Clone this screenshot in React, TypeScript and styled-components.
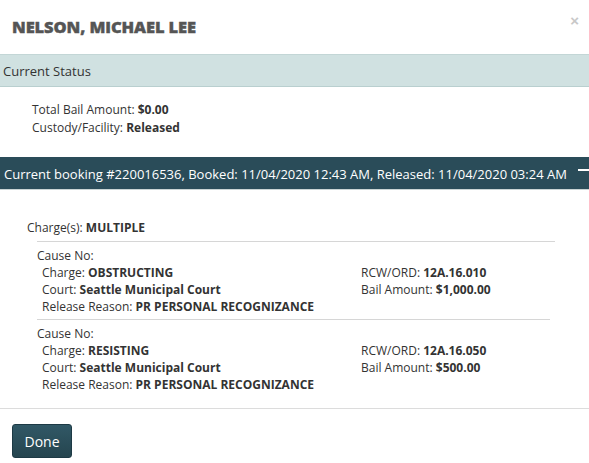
import React from "react";
import styled, { createGlobalStyle } from "styled-components";

const Global = createGlobalStyle`
  html, body { margin: 0; padding: 0; background: #fff; }
  body { font-family: "Open Sans", "Liberation Sans", Arial, sans-serif; color: #333; }
`;

const Modal = styled.div`
  width: 589px;
  height: 463px;
  background: #fff;
  display: flex;
  flex-direction: column;
  overflow: hidden;
  & > * { flex-shrink: 0; }
`;

const Header = styled.div`
  display: flex;
  align-items: center;
  justify-content: space-between;
  height: 54px;
  padding: 0 10px 0 12px;
  box-sizing: border-box;
`;

const Title = styled.h1`
  margin: 0;
  font-size: 16.5px;
  line-height: 24px;
  font-weight: 800;
  color: #555;
  letter-spacing: -0.1px;
  -webkit-text-stroke: 0.4px #555;
`;

const Close = styled.span`
  align-self: flex-start;
  margin-top: 12px;
  font-size: 15px;
  line-height: 18px;
  font-weight: 700;
  color: #c8c8c8;
  font-family: "Liberation Sans", Arial, sans-serif;
`;

const SectionBar = styled.div<{ $dark?: boolean }>`
  display: flex;
  align-items: center;
  justify-content: space-between;
  height: 33px;
  box-sizing: border-box;
  padding: 0 0 0 ${(p) => (p.$dark ? 4 : 3)}px;
  font-size: 13px;
  white-space: nowrap;
  background: ${(p) => (p.$dark ? "#2a4c59" : "#d0e1e1")};
  color: ${(p) => (p.$dark ? "#fff" : "#333")};
  border-top: 1px solid ${(p) => (p.$dark ? "#2a4c59" : "#c3d6d6")};
  border-bottom: 1px solid ${(p) => (p.$dark ? "#c9d4d4" : "#b9cfcf")};
`;

const Minus = styled.span`
  width: 11px;
  height: 2px;
  background: #fff;
  align-self: flex-start;
  margin-top: 11px;
`;

const StatusBody = styled.div`
  padding: 14px 0 20px 32px;
  font-size: 12px;
  line-height: 18px;
`;

const Line = styled.div`
  white-space: nowrap;
`;

const B = styled.b`
  font-weight: 700;
`;

const BookingBody = styled.div`
  padding: 29px 0 11px 27px;
  font-size: 12px;
  line-height: 17px;
`;

const ChargeList = styled.div`
  margin-left: 10px;
  margin-top: 5px;
`;

const Separator = styled.div<{ $width: number }>`
  width: ${(p) => p.$width}px;
  height: 1px;
  background: #d6d6d6;
`;

const Cause = styled.div`
  padding: 5px 0 4px;
`;

const CauseGrid = styled.div`
  display: grid;
  grid-template-columns: 319px auto;
  padding-left: 5px;
`;

const Footer = styled.div`
  border-top: 1px solid #dcdcdc;
  padding: 15px 12px;
`;

const DoneButton = styled.button`
  width: 60px;
  height: 34px;
  border: 1px solid #1d3a45;
  border-radius: 3px;
  background: linear-gradient(#315866, #25454f);
  color: #fff;
  font-family: "Open Sans", "Liberation Sans", Arial, sans-serif;
  font-size: 14px;
  padding: 0;
  cursor: pointer;
`;

type Charge = {
  charge: string;
  rcw: string;
  court: string;
  bail: string;
  reason: string;
};

const charges: Charge[] = [
  {
    charge: "OBSTRUCTING",
    rcw: "12A.16.010",
    court: "Seattle Municipal Court",
    bail: "$1,000.00",
    reason: "PR PERSONAL RECOGNIZANCE",
  },
  {
    charge: "RESISTING",
    rcw: "12A.16.050",
    court: "Seattle Municipal Court",
    bail: "$500.00",
    reason: "PR PERSONAL RECOGNIZANCE",
  },
];

export default function App() {
  return (
    <Modal>
      <Global />
      <Header>
        <Title>NELSON, MICHAEL LEE</Title>
        <Close>×</Close>
      </Header>
      <SectionBar>Current Status</SectionBar>
      <StatusBody>
        <Line>
          Total Bail Amount: <B>$0.00</B>
        </Line>
        <Line>
          Custody/Facility: <B>Released</B>
        </Line>
      </StatusBody>
      <SectionBar $dark>
        <span>
          Current booking #220016536, Booked: 11/04/2020 12:43 AM, Released: 11/04/2020 03:24 AM
        </span>
        <Minus />
      </SectionBar>
      <BookingBody>
        <Line>
          Charge(s): <B>MULTIPLE</B>
        </Line>
        <ChargeList>
          {charges.map((c, i) => (
            <React.Fragment key={i}>
              <Separator $width={i === 0 ? 518 : 513} />
              <Cause>
                <Line>Cause No:</Line>
                <CauseGrid>
                  <Line>
                    Charge: <B>{c.charge}</B>
                  </Line>
                  <Line>
                    RCW/ORD: <B>{c.rcw}</B>
                  </Line>
                  <Line>
                    Court: <B>{c.court}</B>
                  </Line>
                  <Line>
                    Bail Amount: <B>{c.bail}</B>
                  </Line>
                  <Line>
                    Release Reason: <B>{c.reason}</B>
                  </Line>
                </CauseGrid>
              </Cause>
            </React.Fragment>
          ))}
        </ChargeList>
      </BookingBody>
      <Footer>
        <DoneButton>Done</DoneButton>
      </Footer>
    </Modal>
  );
}
